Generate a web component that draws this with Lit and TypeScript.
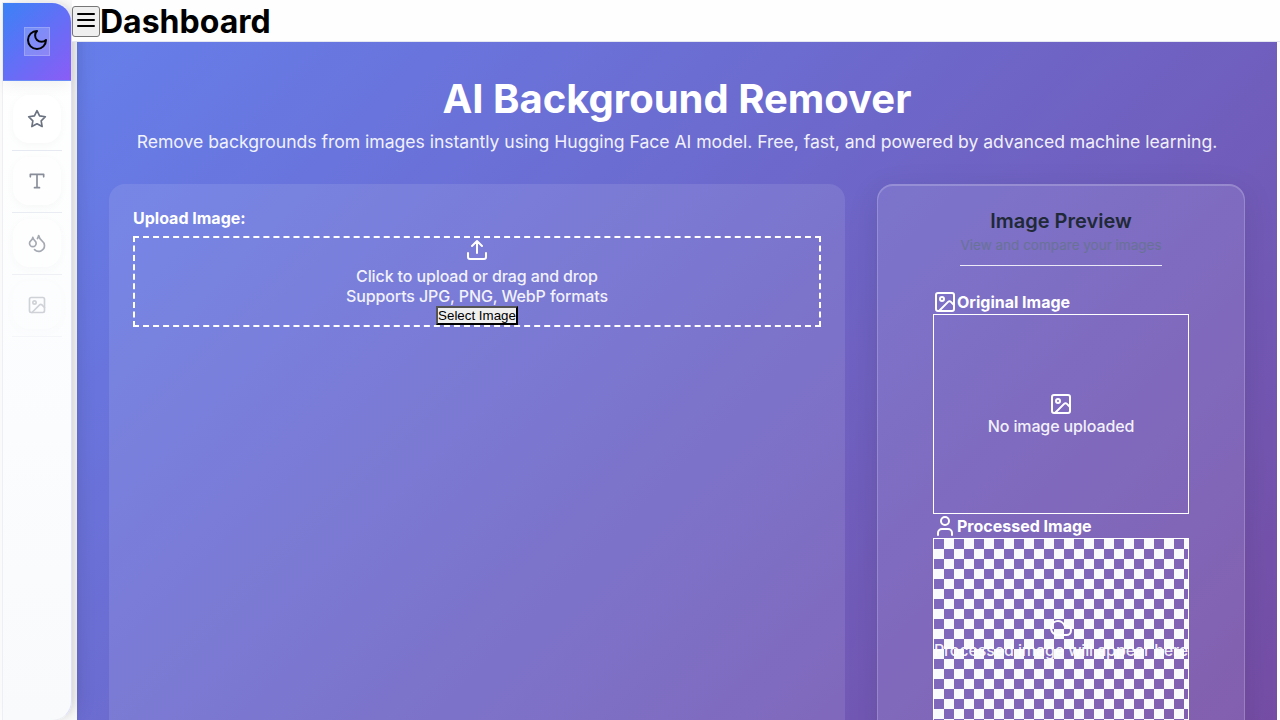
import { LitElement, html, css, svg } from "lit";
import { customElement } from "lit/decorators.js";

const paths = {
  moon: svg`<path d="M12 3a6 6 0 0 0 9 9 9 9 0 1 1-9-9Z"/>`,
  menu: svg`<path d="M4 6h16M4 12h16M4 18h16"/>`,
  star: svg`<polygon points="12 2 15.09 8.26 22 9.27 17 14.14 18.18 21.02 12 17.77 5.82 21.02 7 14.14 2 9.27 8.91 8.26 12 2"/>`,
  type: svg`<path d="M4 7V4h16v3M9 20h6M12 4v16"/>`,
  drops: svg`<path d="M7 16.3c2.2 0 4-1.83 4-4.05 0-1.16-.57-2.26-1.71-3.19S7.29 6.75 7 5.3c-.29 1.45-1.14 2.84-2.29 3.76S3 11.1 3 12.25c0 2.22 1.8 4.05 4 4.05z"/><path d="M12.56 6.6A10.97 10.97 0 0 0 14 3.02c.5 2.5 2 4.9 4 6.5s3 3.5 3 5.5a6.98 6.98 0 0 1-11.91 4.97"/>`,
  image: svg`<rect x="3" y="3" width="18" height="18" rx="2"/><circle cx="9" cy="9" r="2"/><path d="m21 15-3.086-3.086a2 2 0 0 0-2.828 0L6 21"/>`,
  upload: svg`<path d="M21 15v4a2 2 0 0 1-2 2H5a2 2 0 0 1-2-2v-4M17 8l-5-5-5 5M12 3v12"/>`,
  user: svg`<path d="M19 21v-2a4 4 0 0 0-4-4H9a4 4 0 0 0-4 4v2"/><circle cx="12" cy="7" r="4"/>`,
  cloud: svg`<path d="M17.5 19H9a7 7 0 1 1 6.71-9h1.79a4.5 4.5 0 1 1 0 9Z"/>`,
};

const icon = (name: keyof typeof paths, size = 24) => html`<svg
  width=${size} height=${size} viewBox="0 0 24 24" fill="none" stroke="currentColor"
  stroke-width="2" stroke-linecap="round" stroke-linejoin="round">${paths[name]}</svg>`;

@customElement("app-root")
export class AppRoot extends LitElement {
  static styles = css`
    :host { display: block; height: 720px; overflow: hidden; background: #fdfdfd;
      font-family: Inter, sans-serif; font-size: 16px; line-height: 20px; }
    * { box-sizing: border-box; }
    svg { display: block; flex: none; }
    h1, h2, p { margin: 0; }
    .shell { display: flex; height: 720px; }
    .sidebar { position: relative; z-index: 1; width: 70px; height: 719px; margin: 2px 0 0 2px; flex: none;
      border: 1px solid #eeeff3; border-right-color: #dfe0fb; border-radius: 0 20px 20px 0;
      background: linear-gradient(180deg, #ffffff, #f8fafc);
      box-shadow: 8px 0 20px -4px rgba(0, 0, 0, .15), 4px 0 6px -3px rgba(0, 0, 0, .06); }
    .brand { height: 78px; display: flex; align-items: center; justify-content: center;
      border-radius: 0 19px 0 0; border-bottom: 1px solid #6b8df8;
      background: linear-gradient(135deg, #3b82f6, #8b5cf6); box-shadow: 0 4px 16px rgba(0,0,0,.06); }
    .theme { width: 26px; height: 29px; padding: 0 0 3px; border: 1px solid rgba(255,255,255,.2);
      background: rgba(255,255,255,.2); color: #000; }
    .nav { display: flex; flex-direction: column; padding: 7px 9px 0; }
    .slot { height: 62px; padding: 6px 1px 0; border-bottom: 1px solid #e6e8f2; }
    .slot:first-child { height: 63px; padding-top: 7px; }
    .tile { height: 48px; border-radius: 16px; background: #fff; color: #6b7280;
      display: flex; align-items: center; justify-content: center; box-shadow: 0 2px 8px rgba(0,0,0,.03); }
    .s1 { opacity: .8; } .s2 { opacity: .6; } .s3 { opacity: .3; }
    .content { flex: 1; display: flex; flex-direction: column; min-width: 0; }
    .header { position: relative; z-index: 2; height: 42px; flex: none; display: flex; align-items: center;
      background: #fefefe; border-bottom: 1px solid #e5e7f0; padding-top: 2px; }
    .menu { width: 28px; height: 31px; padding: 0 0 3px; border: 1px solid #767676; border-radius: 3px;
      background: #efefef; color: #000; display: flex; align-items: center; justify-content: center; }
    .title { font-size: 32px; line-height: 39px; font-weight: 700; color: #000; }
    .main { flex: none; height: 753px; margin: 0 3px 0 5px; padding: 32px;
      background: linear-gradient(135deg, #667eea, #764ba2); color: #fff; }
    .hero { text-align: center; white-space: nowrap; }
    .hero h1 { font-size: 40px; line-height: 50px; font-weight: 700; }
    .hero p { font-size: 17.6px; letter-spacing: -.03px; line-height: 22px; margin-top: 7px; opacity: .9; }
    .columns { display: grid; grid-template-columns: 736px 368px; gap: 32px; margin-top: 31px; height: 579px; }
    .panel { border-radius: 16px; background: rgba(255,255,255,.1); padding: 24px; }
    .label { font-weight: 700; margin-bottom: 8px; }
    .drop { height: 91px; border: 2px dashed #fff; display: flex; flex-direction: column; align-items: center; }
    .drop svg { margin-bottom: 4px; }
    .soft { opacity: .9; font-weight: 500; letter-spacing: -.12px; }
    .select { font: 13.333px "Liberation Sans", Arial, sans-serif; line-height: 15px; height: 19px; padding: 0;
      border: 2px outset #000; border-radius: 0; background: #efefef; color: #000; white-space: nowrap; }
    .preview { border: 1px solid rgba(255,255,255,.2); padding: 23px 55px; display: flex; flex-direction: column;
      align-items: center; box-shadow: 0 8px 32px rgba(0,0,0,.1), inset 0 1px 0 rgba(255,255,255,.2); }
    .head { text-align: center; padding-bottom: 10px; border-bottom: 1px solid rgba(255,255,255,.85); margin-bottom: 24px; }
    .head h2 { color: #1f2937; font-size: 20px; line-height: 27px; font-weight: 600; }
    .head p { color: #64748b; opacity: .8; font-size: 13.6px; letter-spacing: -.05px; line-height: 20px; }
    .caption { width: 256px; height: 24px; display: flex; align-items: center; font-weight: 700; }
    .frame { width: 256px; height: 200px; flex: none; border: 1px solid #fff; display: flex; flex-direction: column;
      align-items: center; justify-content: center; white-space: nowrap; }
    .checker { background: repeating-conic-gradient(#f8fafc 0 25%, transparent 0 50%) 0 0 / 20px 20px; }
  `;

  render() {
    const nav = ["star", "type", "drops", "image"] as const;
    return html`<div class="shell">
      <aside class="sidebar">
        <div class="brand"><button class="theme">${icon("moon")}</button></div>
        <nav class="nav">${nav.map((n, i) => html`<div class="slot s${i}"><div class="tile">${icon(n, 20)}</div></div>`)}</nav>
      </aside>
      <div class="content">
        <header class="header"><button class="menu">${icon("menu")}</button><div class="title">Dashboard</div></header>
        <main class="main">
          <div class="hero"><h1>AI Background Remover</h1>
            <p>Remove backgrounds from images instantly using Hugging Face AI model. Free, fast, and powered by advanced machine learning.</p></div>
          <div class="columns">
            <section class="panel">
              <div class="label">Upload Image:</div>
              <div class="drop">${icon("upload")}
                <p class="soft">Click to upload or drag and drop</p>
                <p class="soft">Supports JPG, PNG, WebP formats</p>
                <button class="select">Select Image</button></div>
            </section>
            <section class="panel preview">
              <div class="head"><h2>Image Preview</h2><p>View and compare your images</p></div>
              <div class="caption">${icon("image")}Original Image</div>
              <div class="frame">${icon("image")}<p class="soft">No image uploaded</p></div>
              <div class="caption">${icon("user")}Processed Image</div>
              <div class="frame checker">${icon("cloud")}<p class="soft">Processed image will appear here</p></div>
            </section>
          </div>
        </main>
      </div>
    </div>`;
  }
}
